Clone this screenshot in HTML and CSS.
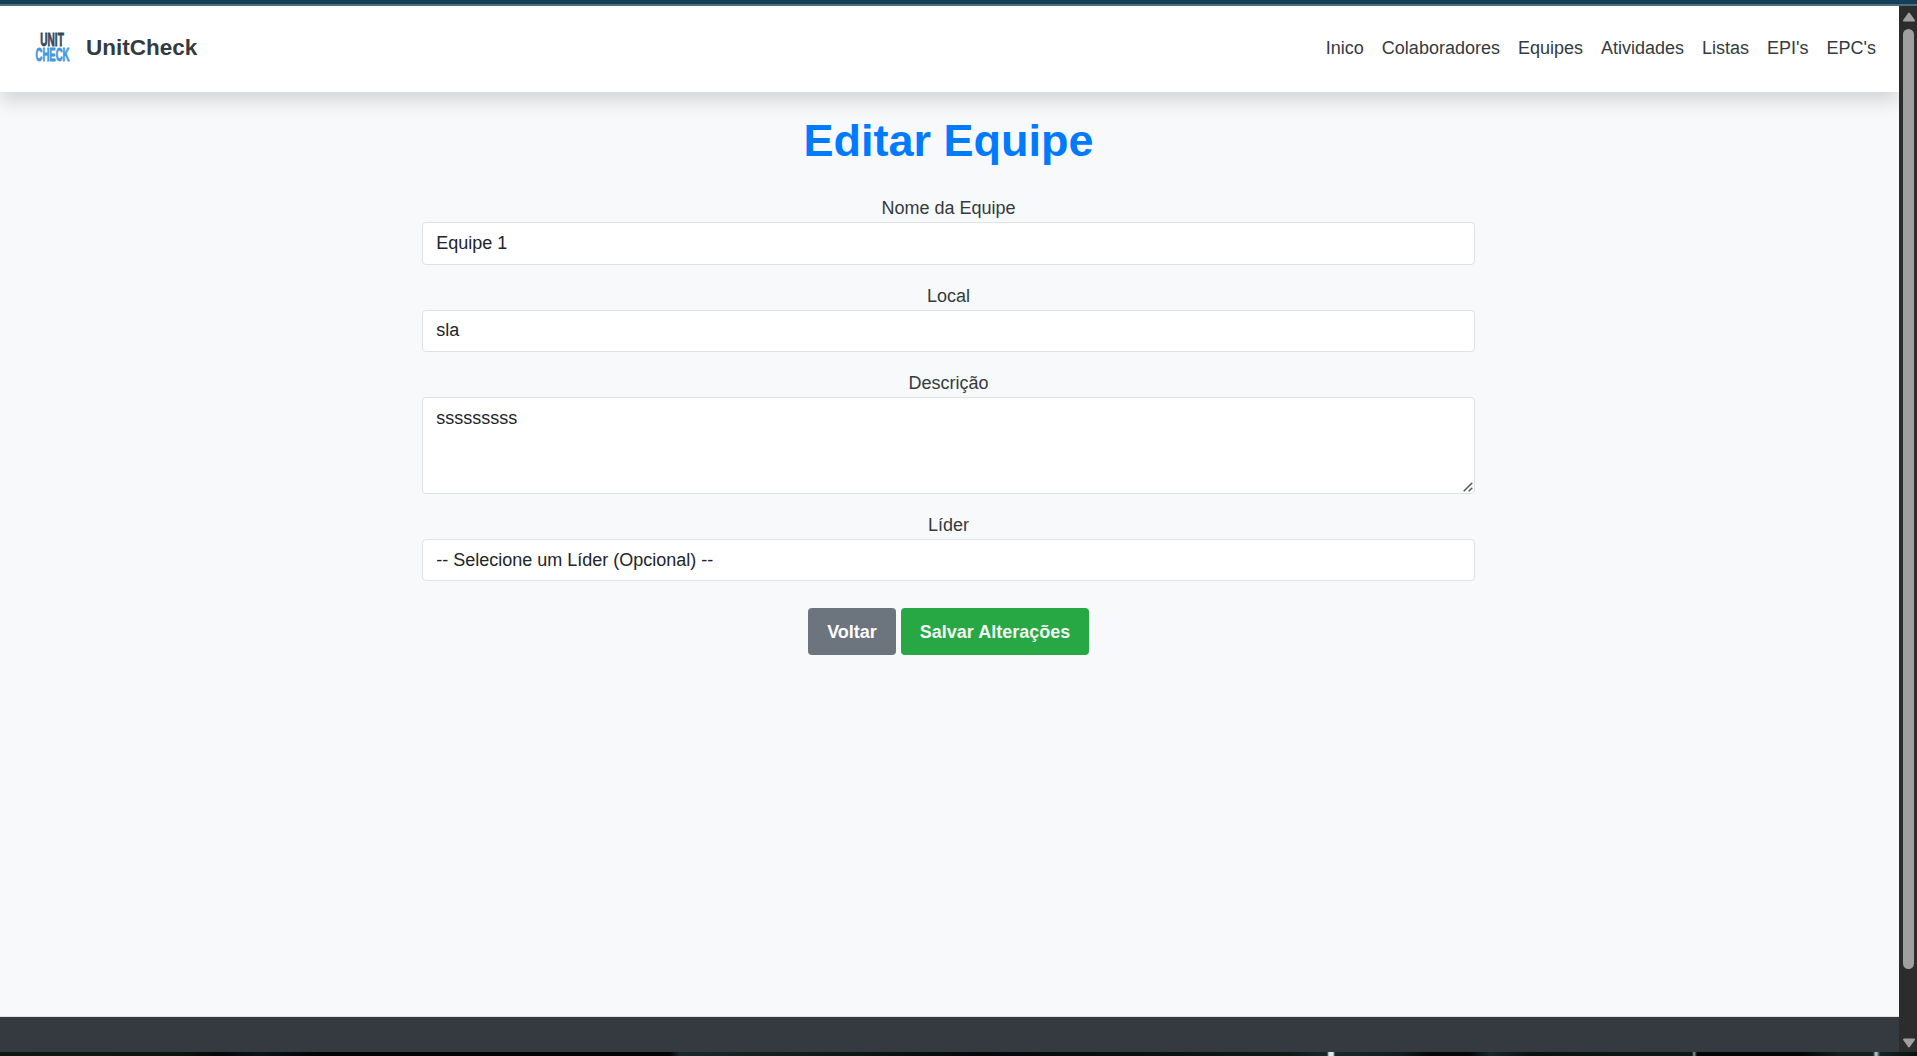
FILE: index.html
```html
<!DOCTYPE html>
<html lang="pt-BR">
<head>
<meta charset="utf-8">
<title>UnitCheck - Editar Equipe</title>
<link rel="stylesheet" href="styles.css">
</head>
<body>
<div class="window-top"></div>
<div class="viewport">
  <div class="page">
    <header class="navbar">
      <a class="brand">
        <svg class="logo" width="37" height="40" viewBox="0 0 37 40">
          <text x="5.3" y="18" textLength="23.5" lengthAdjust="spacingAndGlyphs" fill="#34495e" stroke="#34495e">UNIT</text>
          <text x="0.5" y="33" textLength="34" lengthAdjust="spacingAndGlyphs" fill="#3f97e0" stroke="#3f97e0">CHECK</text>
        </svg>
        <span class="brand-name">UnitCheck</span>
      </a>
      <nav class="menu">
        <a>Inico</a><a>Colaboradores</a><a>Equipes</a><a>Atividades</a><a>Listas</a><a>EPI's</a><a>EPC's</a>
      </nav>
    </header>
    <main class="content">
      <h1 class="title">Editar Equipe</h1>
      <form class="form">
        <label class="label" for="nome">Nome da Equipe</label>
        <input class="control control-first" id="nome" type="text" value="Equipe 1">
        <label class="label" for="local">Local</label>
        <input class="control" id="local" type="text" value="sla">
        <label class="label" for="descricao">Descrição</label>
        <div class="area-wrap">
          <textarea class="control area" id="descricao">sssssssss</textarea>
          <svg class="grip" width="10" height="10" viewBox="0 0 10 10"><path d="M.7 9.3 9.3.7M5.7 9.3 9.3 5.7" stroke="#555" stroke-width="1.5"/></svg>
        </div>
        <label class="label" for="lider">Líder</label>
        <select class="control" id="lider"><option>-- Selecione um Líder (Opcional) --</option></select>
        <div class="actions">
          <button class="btn btn-back" type="button">Voltar</button>
          <button class="btn btn-save" type="button">Salvar Alterações</button>
        </div>
      </form>
    </main>
    <footer class="footer"></footer>
  </div>
  <div class="scrollbar">
    <svg width="14" height="10" viewBox="0 0 14 10"><path d="M7 1.5 12 8.5H2Z" fill="#9f9f9f" stroke="#9f9f9f" stroke-width="2" stroke-linejoin="round"/></svg>
    <div class="thumb"></div>
    <svg width="14" height="10" viewBox="0 0 14 10"><path d="M2 1.5H12L7 8.5Z" fill="#9f9f9f" stroke="#9f9f9f" stroke-width="2" stroke-linejoin="round"/></svg>
  </div>
</div>
<div class="wallpaper"></div>
</body>
</html>
```
FILE: styles.css
```css
* { box-sizing: border-box; }
body {
  margin: 0;
  height: 1056px;
  overflow: hidden;
  display: flex;
  flex-direction: column;
  font: 18px/26px "Liberation Sans", Arial, sans-serif;
  color: #343a40;
}
.window-top { height: 6px; flex: none; background: #163f56; border-bottom: 2px solid #4d6e82; }
.viewport { height: 1046px; display: flex; }
.page { width: 1899px; display: flex; flex-direction: column; background: #f8f9fb; overflow: hidden; }
.navbar {
  height: 86px;
  flex: none;
  padding: 0 23px 2px 35px;
  display: flex;
  align-items: center;
  justify-content: space-between;
  background: #fff;
  box-shadow: 0 9px 18px rgba(0, 0, 0, .15);
}
.brand { display: flex; align-items: center; gap: 14px; }
.logo { font: bold 17.5px "Liberation Sans", Arial, sans-serif; stroke-width: .8px; overflow: visible; }
.brand-name { font-size: 22.5px; font-weight: bold; }
.menu { display: flex; gap: 18px; }
.content { flex: 1; padding: 21px 0 0 422px; }
.title {
  width: 1053px;
  margin: 0 0 26px;
  font-size: 45px;
  line-height: 56px;
  text-align: center;
  color: #007bff;
}
.form { width: 1053px; display: flex; flex-direction: column; }
.label { height: 27px; text-align: center; }
.control {
  display: block;
  width: 100%;
  height: 42px;
  margin: 0 0 18px;
  padding: 6.6px 13.2px 7.4px;
  border: 1px solid #dee2e6;
  border-radius: 4px;
  background: #fff;
  font: inherit;
  color: #212529;
  appearance: none;
}
.control-first { height: 43px; padding-top: 8px; }
.area-wrap { position: relative; }
.area { height: 97px; resize: none; }
.grip { position: absolute; right: 2px; bottom: 20px; fill: none; }
.actions { display: flex; justify-content: center; gap: 5px; padding-top: 9px; }
.btn {
  height: 47px;
  padding: 0;
  border: 0;
  border-radius: 4px;
  font: bold 18px/26px "Liberation Sans", Arial, sans-serif;
  color: #fff;
}
.btn-back { width: 88px; background: #6c757d; }
.btn-save { width: 188px; background: #28a745; color: #f0f5f1; }
.footer { height: 36px; flex: none; background: #343a40; border-top: 1px solid #dee2e6; }
.scrollbar {
  width: 18px;
  padding: 6px 2px 4px 3px;
  display: flex;
  flex-direction: column;
  align-items: center;
  background: #2c2c2c;
}
.scrollbar svg { flex: none; }
.thumb { width: 11px; height: 940px; margin: 7px 0 auto; border-radius: 6px; background: #9f9f9f; }
.wallpaper {
  height: 4px;
  background: linear-gradient(90deg, #0c1912 0, #0b160f 180px, #03080b 220px, #091516 260px, #010407 320px, #010407 670px, #172a29 680px, #0a1916 850px, #03080b 980px, #0b1b18 1290px, #15292a 1327px, #dfe8e8 1329px, #dfe8e8 1333px, #15292a 1335px, #0e1f1e 1400px, #03090b 1430px, #03090b 1470px, #14292a 1490px, #071411 1530px, #0a1918 1692px, #839895 1694px, #020607 1697px, #020607 1800px, #12201f 1840px, #12201f 1873px, #c4d8da 1876px, #132423 1880px, #061210 1917px);
}
```
